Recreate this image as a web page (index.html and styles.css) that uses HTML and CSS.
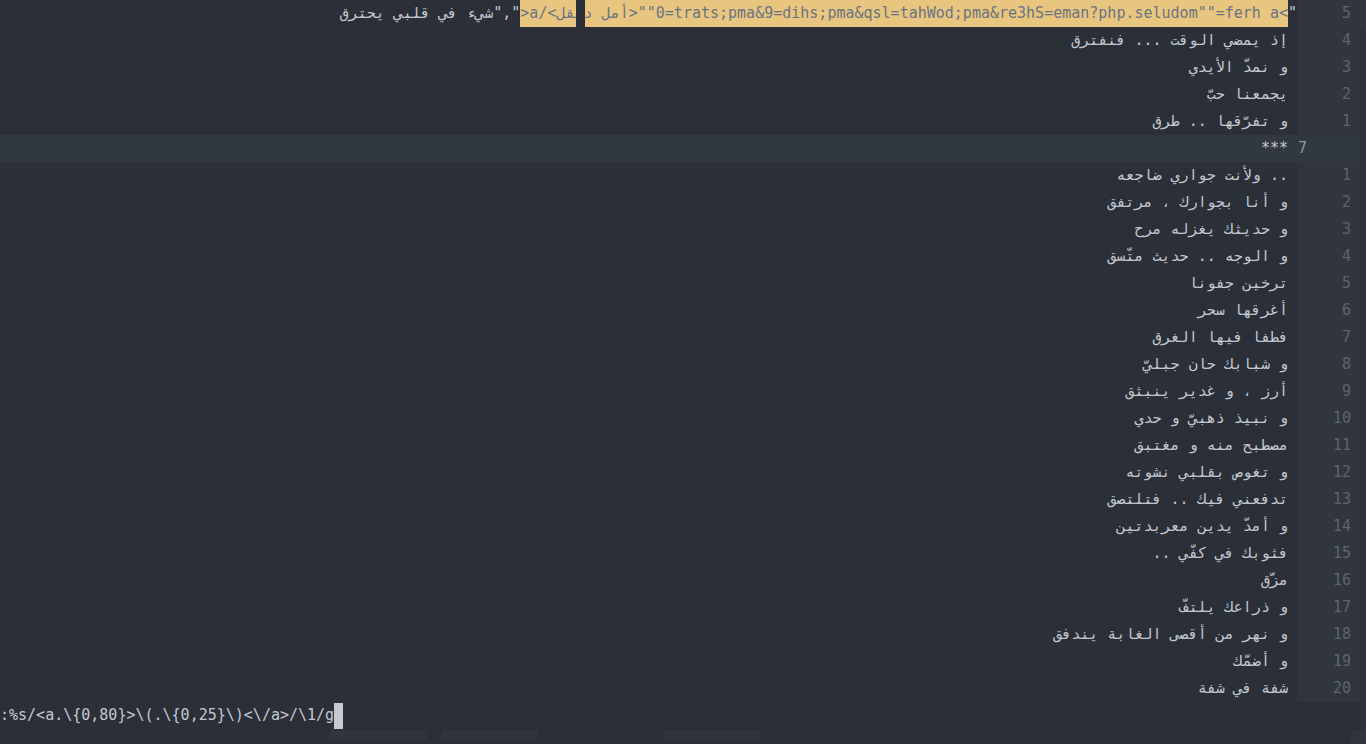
FILE: index.html
```html
<!DOCTYPE html>
<html lang="ar">
<head>
<meta charset="utf-8">
<link rel="stylesheet" href="styles.css">
</head>
<body>
<div class="screen">
  <div class="lines">
    <div class="row">
      <div class="text top"><span class="ar">شيء في قلبي يحترق</span>","<span class="hl">&gt;a/&lt;<span class="ar">أمل دنقل</span>&gt;""0=trats;pma&amp;9=dihs;pma&amp;qsl=tahWod;pma&amp;re3hS=eman?php.seludom""=ferh a&lt;<span class="mark"></span></span>"</div>
      <div class="num">5</div>
    </div>
    <div class="row"><div class="text">إذ يمضي الوقت ... فنفترق</div><div class="num">4</div></div>
    <div class="row"><div class="text">و نمدّ الأيدي</div><div class="num">3</div></div>
    <div class="row"><div class="text">يجمعنا حبّ</div><div class="num">2</div></div>
    <div class="row"><div class="text">و تفرّقها .. طرق</div><div class="num">1</div></div>
    <div class="row cursor"><div class="text">***</div><div class="num">7</div></div>
    <div class="row"><div class="text">.. ولأنت جواري ضاجعه</div><div class="num">1</div></div>
    <div class="row"><div class="text">و أنا بجوارك ، مرتفق</div><div class="num">2</div></div>
    <div class="row"><div class="text">و حديثك يغزله مرح</div><div class="num">3</div></div>
    <div class="row"><div class="text">و الوجه .. حديث متّسق</div><div class="num">4</div></div>
    <div class="row"><div class="text">ترخين جفونا</div><div class="num">5</div></div>
    <div class="row"><div class="text">أغرقها سحر</div><div class="num">6</div></div>
    <div class="row"><div class="text">فطفا فيها الغرق</div><div class="num">7</div></div>
    <div class="row"><div class="text">و شبابك حان جبليّ</div><div class="num">8</div></div>
    <div class="row"><div class="text">أرز ، و غدير ينبثق</div><div class="num">9</div></div>
    <div class="row"><div class="text">و نبيذ ذهبيّ و حدي</div><div class="num">10</div></div>
    <div class="row"><div class="text">مصطبح منه و مغتبق</div><div class="num">11</div></div>
    <div class="row"><div class="text">و تغوص بقلبي نشوته</div><div class="num">12</div></div>
    <div class="row"><div class="text">تدفعني فيك .. فتلتصق</div><div class="num">13</div></div>
    <div class="row"><div class="text">و أمدّ يدين معربدتين</div><div class="num">14</div></div>
    <div class="row"><div class="text">فثوبك في كفّي ..</div><div class="num">15</div></div>
    <div class="row"><div class="text">مزّق</div><div class="num">16</div></div>
    <div class="row"><div class="text">و ذراعك يلتفّ</div><div class="num">17</div></div>
    <div class="row"><div class="text">و نهر من أقصى الغابة يندفق</div><div class="num">18</div></div>
    <div class="row"><div class="text">و أضمّك</div><div class="num">19</div></div>
    <div class="row"><div class="text">شفة في شفة</div><div class="num">20</div></div>
  </div>
  <div class="vscroll"><div class="thumb"></div></div>
  <div class="cmd">:%s/&lt;a.\{0,80}&gt;\(.\{0,25}\)&lt;\/a&gt;/\1/g<span class="cur"></span></div>
  <div class="hbar">
    <div class="ghost g1"></div>
    <div class="ghost g2"></div>
    <div class="ghost g3"></div>
    <div class="arrow"></div>
  </div>
</div>
</body>
</html>
```

FILE: styles.css
```css
html, body {
  margin: 0;
  padding: 0;
  background: #2b2f38;
  overflow: hidden;
}

.screen {
  display: grid;
  grid-template-columns: 1360px 6px;
  grid-template-rows: 702px 27px 15px;
  width: 1366px;
  height: 744px;
  font-family: "DejaVu Sans Mono", monospace;
  font-size: 15px;
  color: #c3c8d0;
}

.lines {
  grid-column: 1;
  grid-row: 1;
  display: flex;
  flex-direction: column;
}

.row {
  display: flex;
  height: 27px;
  line-height: 27px;
}

.text {
  flex: 1;
  min-width: 0;
  direction: rtl;
  text-align: right;
  white-space: pre;
  overflow: hidden;
  padding-right: 9px;
}

.text.top {
  direction: ltr;
  unicode-bidi: bidi-override;
  padding-right: 0;
}

.ar {
  direction: rtl;
  unicode-bidi: isolate;
}

.hl {
  display: inline-block;
  vertical-align: top;
  height: 27px;
  position: relative;
  direction: ltr;
  unicode-bidi: bidi-override;
  background: #e9c680;
  color: #6a7380;
}

.mark {
  position: absolute;
  left: 56px;
  top: 0;
  width: 9px;
  height: 27px;
  background: #2b2f38;
}

.num {
  width: 63px;
  box-sizing: border-box;
  padding-right: 9px;
  text-align: right;
  background: #31363e;
  color: #5b6570;
}

.row.cursor {
  background: #323840;
}

.row.cursor .num {
  text-align: left;
  padding-left: 1px;
  background: #323840;
  color: #8d97a2;
}

.vscroll {
  grid-column: 2;
  grid-row: 1 / 3;
  background: #2d3139;
  display: flex;
  flex-direction: column;
}

.thumb {
  height: 30px;
  background: #30353d;
}

.cmd {
  grid-column: 1;
  grid-row: 2;
  line-height: 27px;
  white-space: pre;
  display: flex;
  align-items: stretch;
}

.cur {
  display: inline-block;
  width: 9px;
  height: 26px;
  margin-top: 1px;
  background: #c5c9d0;
}

.hbar {
  grid-column: 1 / 3;
  grid-row: 3;
  display: flex;
  align-items: flex-start;
}

.ghost {
  height: 10px;
  margin-top: 1px;
  background: #2f343d;
}

.g1 { width: 97px; margin-left: 330px; }
.g2 { width: 96px; margin-left: 15px; }
.g3 { width: 97px; margin-left: 125px; }

.arrow {
  margin-left: auto;
  width: 15px;
  height: 14px;
  margin-top: 1px;
  background: #30353d;
}
```
